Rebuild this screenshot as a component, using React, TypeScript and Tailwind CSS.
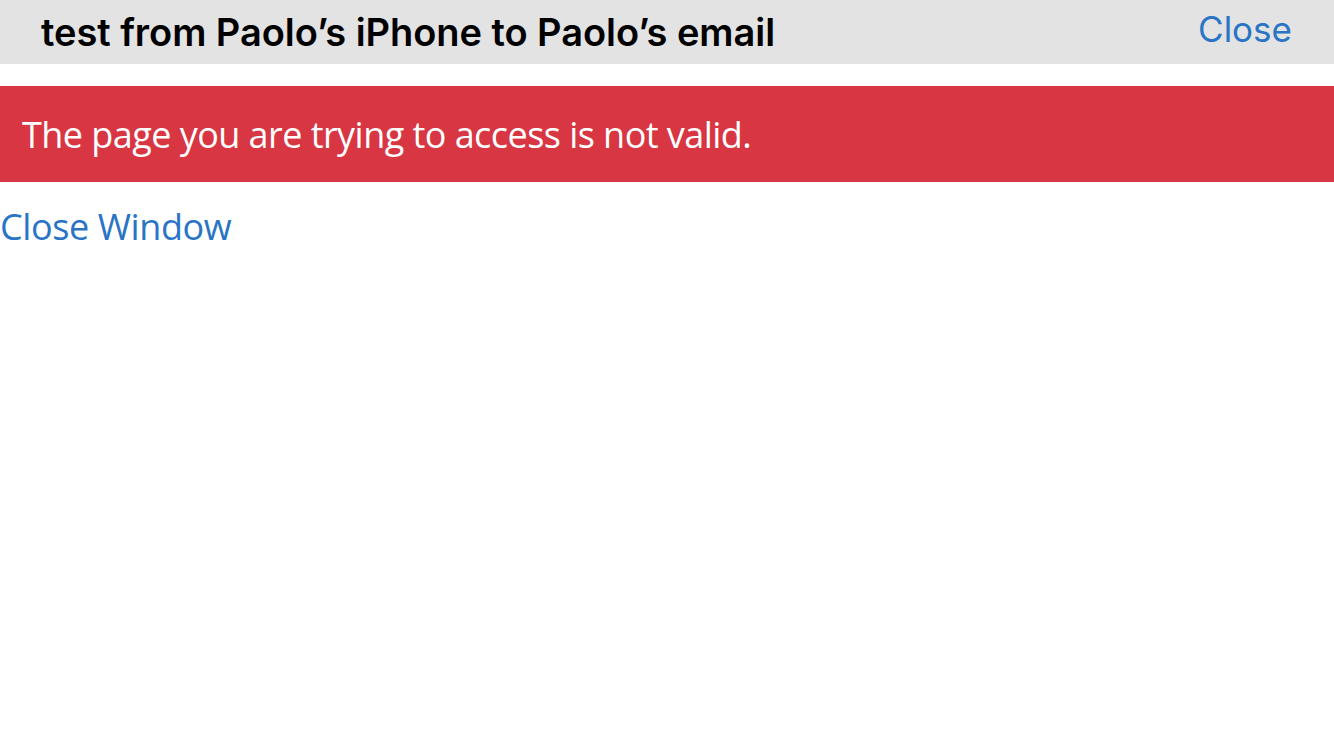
export default function App() {
  return (
    <div className="w-[1334px] h-[750px] bg-white overflow-hidden">
      <div className="h-[64px] bg-[#e3e3e3] flex items-center justify-between pl-[41px] pr-[42px]">
        <span className="text-[38px] font-semibold text-black tracking-[-0.05px] leading-none" style={{ fontFamily: "Inter, 'Liberation Sans', sans-serif" }}>
          test from Paolo’s iPhone to Paolo’s email
        </span>
        <span className="text-[35px] text-[#2a74c5] leading-none -mt-[6px]" style={{ fontFamily: "Inter, 'Liberation Sans', sans-serif" }}>
          Close
        </span>
      </div>
      <div className="mt-[22px] h-[96px] bg-[#d73642] flex items-center pl-[22px]">
        <span className="text-[36px] text-white leading-none tracking-[-0.55px] mt-[2px]" style={{ fontFamily: "'Open Sans', sans-serif" }}>
          The page you are trying to access is not valid.
        </span>
      </div>
      <div className="mt-[27px]">
        <span className="text-[36px] text-[#2a74c5] leading-none tracking-[-0.4px]" style={{ fontFamily: "'Open Sans', sans-serif" }}>
          Close Window
        </span>
      </div>
    </div>
  );
}
